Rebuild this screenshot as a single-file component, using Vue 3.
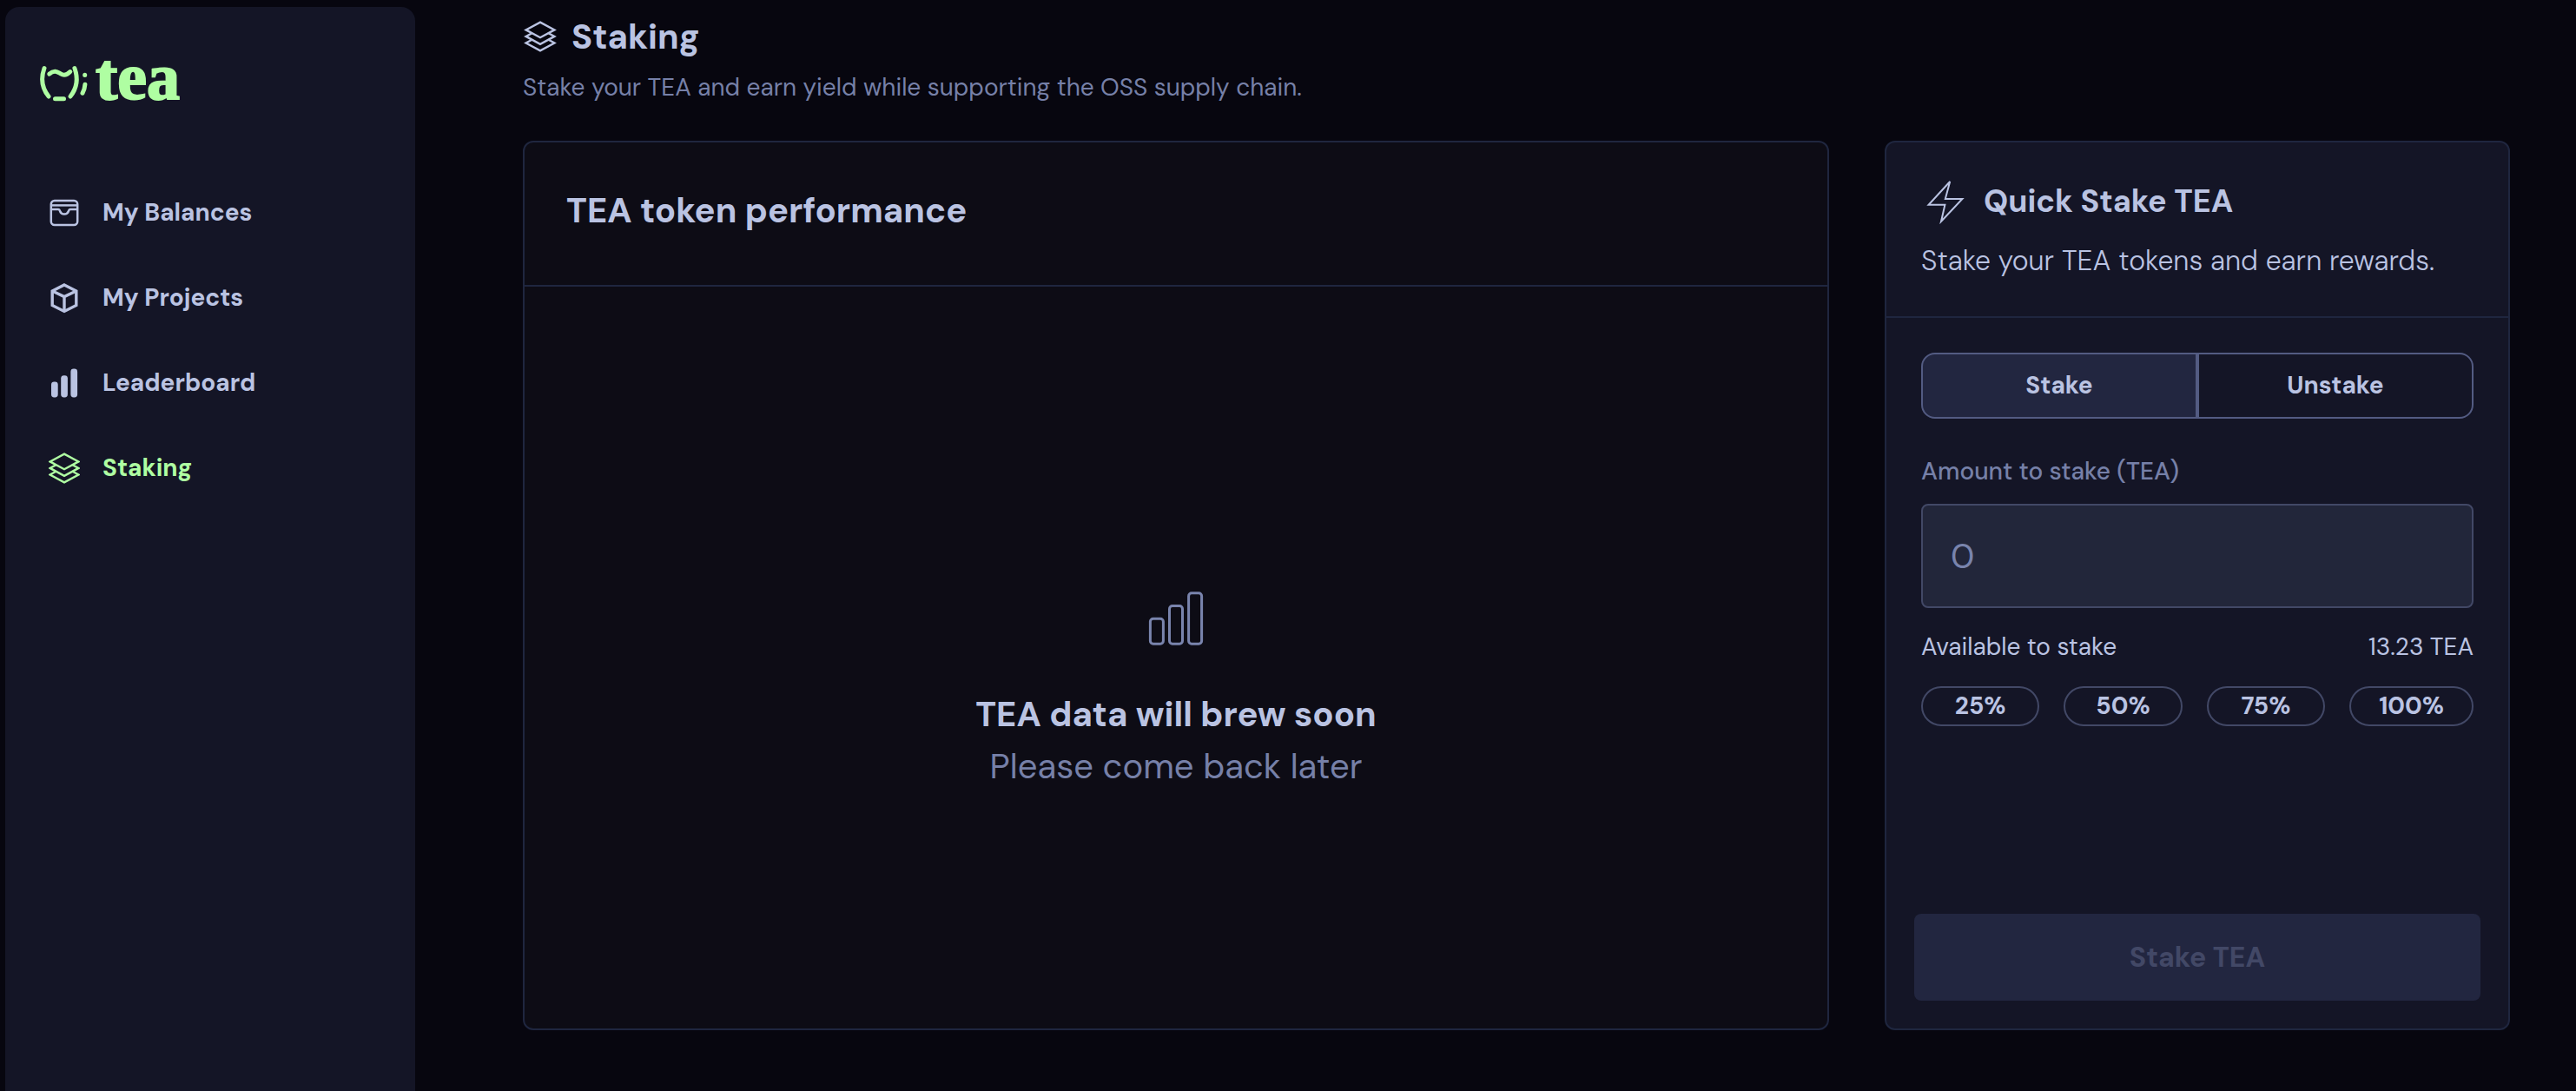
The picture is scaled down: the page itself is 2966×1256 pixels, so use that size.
<template>
  <div class="app">
    <aside class="sidebar">
      <a href="/" class="logo" aria-label="tea">
        <svg class="logo-mark" viewBox="0 0 56 48" aria-hidden="true">
          <path d="M5 6.5C1.2 17 1.2 28 10 39" />
          <path d="M39.9 6.5C43.7 17 43.7 28 35 39" />
          <path d="M10.8 13.2C17 7.5 21 11.5 24 13C27.5 15.4 31.5 14 34.8 10.6" />
          <path d="M17.5 41.7H27.5" />
          <path d="M51.7 14.3V14.5" />
          <path d="M51.9 25.2Q51.6 30.5 49 35.2" />
        </svg>
        <span class="logo-text">tea</span>
      </a>

      <nav class="nav">
        <a
          v-for="item in items"
          :key="item.label"
          :href="item.href"
          class="nav-item"
          :class="{ active: item.label === 'Staking' }"
        >
          <svg class="nav-icon" viewBox="0 0 36 36" aria-hidden="true">
            <g v-if="item.icon === 'wallet'" stroke-width="2.5">
              <rect x="2.8" y="4" width="30.4" height="28" rx="4" />
              <path d="M3 9.4H33" />
              <path d="M3 14H11Q12.5 14 13 16Q14.3 19.5 18 19.5Q21.7 19.5 23 16Q23.5 14 25 14H33" />
            </g>
            <g v-else-if="item.icon === 'box'" stroke-width="3.4">
              <path d="M18 3L31.8 10V26.4L18 33.4L4.2 26.4V10Z" />
              <path d="M4.2 10L18 16.5L31.8 10M18 16.5V33" />
            </g>
            <g v-else-if="item.icon === 'bars'" class="solid">
              <rect x="3" y="16.4" width="7.7" height="18" rx="3.4" />
              <rect x="14.2" y="9.2" width="7.7" height="25.2" rx="3.4" />
              <rect x="25.4" y="1.6" width="7.7" height="32.8" rx="3.4" />
            </g>
            <g v-else stroke-width="2.4">
              <path d="M18 1.6L34.4 10.4L18 19.2L1.6 10.4Z" />
              <path d="M8.4 14.2L1.6 17.9L18 26.8L34.4 17.9L27.6 14.2" />
              <path d="M8.4 21.8L1.6 25.5L18 34.3L34.4 25.5L27.6 21.8" />
            </g>
          </svg>
          <span>{{ item.label }}</span>
        </a>
      </nav>
    </aside>

    <main class="main">
      <header class="page-header">
        <h1>
          <svg class="title-icon" viewBox="0 0 36 36" aria-hidden="true">
            <path d="M18 1.6L34.4 10.4L18 19.2L1.6 10.4Z" />
            <path d="M8.4 14.2L1.6 17.9L18 26.8L34.4 17.9L27.6 14.2" />
            <path d="M8.4 21.8L1.6 25.5L18 34.3L34.4 25.5L27.6 21.8" />
          </svg>
          Staking
        </h1>
        <p>Stake your TEA and earn yield while supporting the OSS supply chain.</p>
      </header>

      <div class="columns">
        <section class="card performance">
          <h2>TEA token performance</h2>
          <div class="empty">
            <svg class="empty-icon" viewBox="0 0 72 72" aria-hidden="true">
              <rect x="6.4" y="36.2" width="15" height="29" rx="3.4" />
              <rect x="28.5" y="21.6" width="15" height="43.6" rx="3.4" />
              <rect x="50.6" y="6.8" width="15" height="58.4" rx="3.4" />
            </svg>
            <p class="empty-title">TEA data will brew soon</p>
            <p class="empty-text">Please come back later</p>
          </div>
        </section>

        <section class="card stake">
          <div class="stake-header">
            <h2>
              <svg class="bolt" viewBox="0 0 56 56" aria-hidden="true">
                <path d="M33.2 5L27.8 25H47.4L23 51L27.4 31.7H8.6Z" />
              </svg>
              Quick Stake TEA
            </h2>
            <p>Stake your TEA tokens and earn rewards.</p>
          </div>

          <form class="stake-form" @submit.prevent>
            <div class="toggle">
              <button type="button" :class="{ selected: mode === 'stake' }" @click="mode = 'stake'">Stake</button>
              <button type="button" :class="{ selected: mode === 'unstake' }" @click="mode = 'unstake'">Unstake</button>
            </div>

            <label for="amount">Amount to stake (TEA)</label>
            <input id="amount" v-model="amount" type="text" inputmode="decimal" placeholder="0" />

            <div class="available">
              <span>Available to stake</span>
              <span>{{ balance }} TEA</span>
            </div>

            <div class="percents">
              <button v-for="p in percents" :key="p" type="button" @click="setPercent(p)">{{ p }}%</button>
            </div>

            <button type="submit" class="submit" :disabled="!amount">Stake TEA</button>
          </form>
        </section>
      </div>
    </main>
  </div>
</template>

<script setup>
import { ref } from 'vue';

const items = [
  { label: 'My Balances', icon: 'wallet', href: '/balances' },
  { label: 'My Projects', icon: 'box', href: '/projects' },
  { label: 'Leaderboard', icon: 'bars', href: '/leaderboard' },
  { label: 'Staking', icon: 'layers', href: '/staking' },
];

const percents = [25, 50, 75, 100];
const balance = 13.23;

const mode = ref('stake');
const amount = ref('');

function setPercent(p) {
  amount.value = String((balance * p) / 100);
}
</script>

<style>
body {
  background: #07060f;
}
</style>

<style scoped>
.app {
  display: flex;
  min-height: 100vh;
  color: #bac3e2;
  font-family: "DM Sans", Inter, sans-serif;
  font-size: 28px;
  line-height: 40px;
}

h1,
h2,
p {
  margin: 0;
}

svg {
  flex: none;
  fill: none;
  stroke: currentColor;
}

button,
input {
  font: inherit;
  color: inherit;
  box-sizing: border-box;
}

button {
  cursor: pointer;
}

.sidebar {
  flex: none;
  width: 472px;
  margin: 8px 0 0 6px;
  background: #141526;
  border-radius: 16px 16px 0 0;
}

.logo {
  display: flex;
  align-items: center;
  gap: 8px;
  padding: 40px 40px 0;
  color: #affea2;
  text-decoration: none;
}

.logo-mark {
  width: 56px;
  height: 48px;
  margin-top: 16px;
  stroke-width: 5;
  stroke-linecap: round;
}

.logo-text {
  font-family: "Liberation Serif", serif;
  font-weight: 700;
  font-size: 76px;
  line-height: 80px;
  -webkit-text-stroke: 2px currentColor;
}

.nav {
  display: flex;
  flex-direction: column;
  gap: 58px;
  padding: 97px 50px 0;
}

.nav-item {
  display: flex;
  align-items: center;
  gap: 26px;
  color: inherit;
  font-weight: 700;
  text-decoration: none;
}

.nav-item.active {
  color: #affea2;
}

.nav-icon {
  width: 36px;
  height: 36px;
}

.solid {
  fill: currentColor;
  stroke: none;
}

.main {
  flex: 1;
  min-width: 0;
  display: flex;
  flex-direction: column;
  padding: 16px 76px 70px 124px;
}

.page-header h1 {
  display: flex;
  align-items: center;
  gap: 16px;
  font-size: 40px;
  line-height: 52px;
  font-weight: 700;
}

.title-icon {
  width: 40px;
  height: 36px;
  stroke-width: 2.4;
}

.page-header p {
  margin-top: 13px;
  color: #7680a8;
}

.columns {
  flex: 1;
  display: grid;
  grid-template-columns: minmax(0, 1fr) 720px;
  gap: 64px;
  margin-top: 41px;
}

.card {
  display: flex;
  flex-direction: column;
  border: 2px solid #1f263f;
  border-radius: 12px;
}

.performance {
  background: #0d0c15;
}

.performance h2 {
  padding: 52px 48px 60px;
  border-bottom: 2px solid #1f263f;
  font-size: 40px;
  line-height: 52px;
  font-weight: 700;
}

.empty {
  flex: 1;
  display: flex;
  flex-direction: column;
  align-items: center;
  justify-content: center;
  padding-top: 74px;
  font-size: 40px;
  line-height: 60px;
}

.empty-icon {
  width: 72px;
  height: 72px;
  margin-bottom: 44px;
  color: #7984ad;
  stroke-width: 3;
}

.empty-title {
  font-weight: 700;
}

.empty-text {
  color: #7680a8;
  font-weight: 400;
}

.stake {
  background: #141526;
}

.stake-header {
  padding: 40px;
  border-bottom: 2px solid #1f263f;
}

.stake-header h2 {
  display: flex;
  align-items: center;
  gap: 16px;
  font-size: 36px;
  line-height: 56px;
  font-weight: 700;
}

.bolt {
  width: 56px;
  height: 56px;
  stroke-width: 2;
}

.stake-header p {
  margin-top: 16px;
  font-size: 32px;
  line-height: 48px;
  font-weight: 300;
}

.stake-form {
  flex: 1;
  display: flex;
  flex-direction: column;
  padding: 40px 40px 32px;
}

.toggle {
  display: grid;
  grid-template-columns: 1fr 1fr;
  height: 76px;
}

.toggle button {
  background: none;
  border: 2px solid #535b82;
  font-weight: 700;
}

.toggle button:first-child {
  border-radius: 16px 0 0 16px;
}

.toggle button:last-child {
  border-radius: 0 16px 16px 0;
}

.toggle .selected {
  background: #222640;
}

label {
  margin-top: 41px;
  color: #7680a8;
  font-weight: 500;
}

input {
  width: 100%;
  height: 120px;
  margin-top: 17px;
  padding: 0 32px;
  background: #22263a;
  border: 2px solid #424866;
  border-radius: 8px;
  font-size: 40px;
}

input::placeholder {
  color: #7984ad;
  opacity: 1;
}

.available {
  display: flex;
  justify-content: space-between;
  margin-top: 25px;
}

.percents {
  display: flex;
  gap: 28px;
  margin-top: 25px;
}

.percents button {
  flex: 1;
  height: 46px;
  padding: 0 32px;
  background: none;
  border: 2px solid #424866;
  border-radius: 23px;
  font-weight: 700;
  line-height: 40px;
}

.submit {
  height: 100px;
  margin: auto -8px 0;
  background: #222640;
  border: 0;
  border-radius: 8px;
  font-size: 32px;
  font-weight: 700;
}

.submit:disabled {
  color: #424866;
  cursor: default;
}
</style>
